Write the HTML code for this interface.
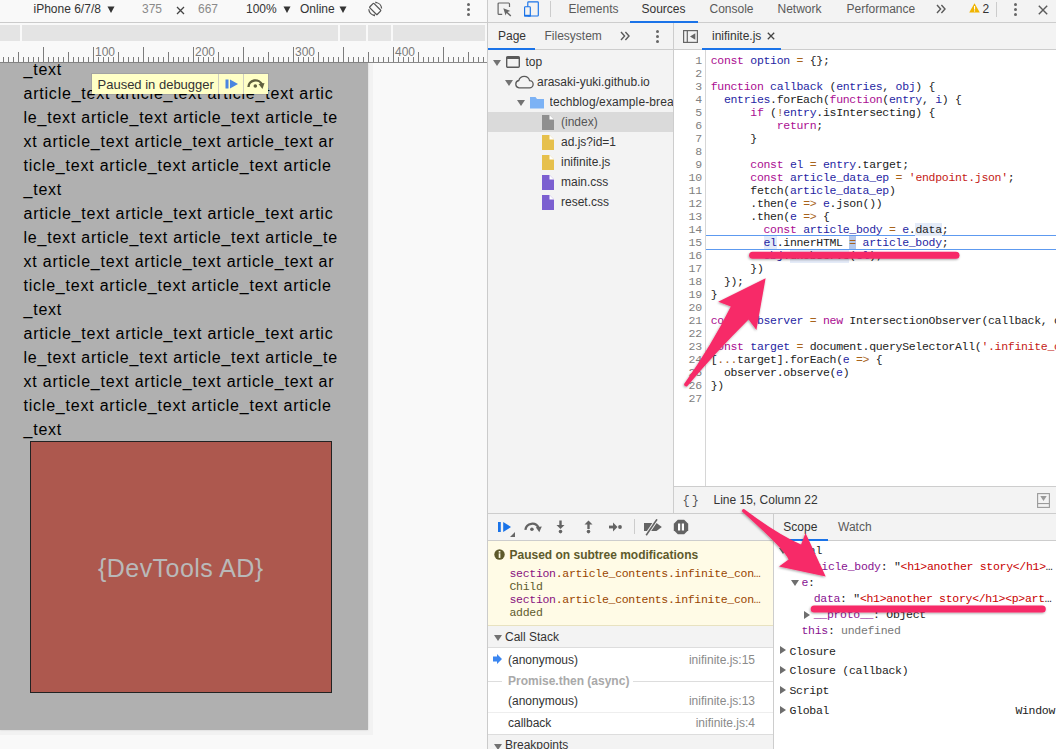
<!DOCTYPE html><html><head><meta charset="utf-8"><style>html,body{margin:0;padding:0}body{width:1056px;height:749px;overflow:hidden;position:relative;background:#f9f9f9;font-family:"Liberation Sans",sans-serif}</style></head><body><div style="position:absolute;left:0px;top:0px;width:487px;height:749px;background:#f9f9f9"></div><div style="position:absolute;left:0px;top:22px;width:487px;height:1px;background:#cbcbcb"></div><div style="position:absolute;left:33.5px;top:-1.16px;line-height:20px;font-size:12px;font-family:'Liberation Sans',sans-serif;color:#333;white-space:pre;">iPhone 6/7/8</div><svg style="position:absolute;left:107px;top:5px" width="8" height="8"><path d="M0.5 1.5 L7.5 1.5 L4 8 Z" fill="#333"/></svg><div style="position:absolute;left:142px;top:-1.16px;line-height:20px;font-size:12px;font-family:'Liberation Sans',sans-serif;color:#8a8a8a;white-space:pre;">375</div><svg style="position:absolute;left:176px;top:6px" width="9" height="9"><path d="M1 1 L8 8 M8 1 L1 8" stroke="#444" stroke-width="1.3"/></svg><div style="position:absolute;left:198px;top:-1.16px;line-height:20px;font-size:12px;font-family:'Liberation Sans',sans-serif;color:#8a8a8a;white-space:pre;">667</div><div style="position:absolute;left:246px;top:-1.16px;line-height:20px;font-size:12px;font-family:'Liberation Sans',sans-serif;color:#333;white-space:pre;">100%</div><svg style="position:absolute;left:283px;top:5px" width="8" height="8"><path d="M0.5 1.5 L7.5 1.5 L4 8 Z" fill="#333"/></svg><div style="position:absolute;left:300px;top:-1.16px;line-height:20px;font-size:12px;font-family:'Liberation Sans',sans-serif;color:#333;white-space:pre;">Online</div><svg style="position:absolute;left:339px;top:5px" width="8" height="8"><path d="M0.5 1.5 L7.5 1.5 L4 8 Z" fill="#333"/></svg><svg style="position:absolute;left:367px;top:1px" width="17" height="16" viewBox="0 0 17 16"><g transform="translate(8.2 7.9)"><rect x="-5.3" y="-3" width="10.6" height="6" rx="0.8" transform="rotate(45)" fill="none" stroke="#555" stroke-width="1.25"/><path d="M0.6 -6.4 A6.4 6.4 0 0 1 6.4 -0.4" fill="none" stroke="#555" stroke-width="1.25"/><path d="M-0.6 6.4 A6.4 6.4 0 0 1 -6.4 0.4" fill="none" stroke="#555" stroke-width="1.25"/><path d="M0.2 -7.5 L2.4 -6.4 L0.2 -5.3 Z" fill="#555"/><path d="M-0.2 7.5 L-2.4 6.4 L-0.2 5.3 Z" fill="#555"/></g></svg><div style="position:absolute;left:466.7px;top:3.0px;width:3px;height:3px;border-radius:50%;background:#666"></div><div style="position:absolute;left:466.7px;top:8.0px;width:3px;height:3px;border-radius:50%;background:#666"></div><div style="position:absolute;left:466.7px;top:13.0px;width:3px;height:3px;border-radius:50%;background:#666"></div><div style="position:absolute;left:0px;top:25px;width:20px;height:16px;background:#e4e4e4"></div><div style="position:absolute;left:22px;top:25px;width:316px;height:16px;background:#e4e4e4"></div><div style="position:absolute;left:340px;top:25px;width:26px;height:16px;background:#e4e4e4"></div><div style="position:absolute;left:368px;top:25px;width:23px;height:16px;background:#e4e4e4"></div><div style="position:absolute;left:393px;top:25px;width:92px;height:16px;background:#e4e4e4"></div><svg style="position:absolute;left:0;top:0" width="487" height="64"><rect x="3" y="57" width="1" height="5" fill="#7c7c7c"/><rect x="8" y="57" width="1" height="5" fill="#7c7c7c"/><rect x="13" y="57" width="1" height="5" fill="#7c7c7c"/><rect x="18" y="52" width="1" height="10" fill="#7c7c7c"/><rect x="23" y="57" width="1" height="5" fill="#7c7c7c"/><rect x="28" y="57" width="1" height="5" fill="#7c7c7c"/><rect x="33" y="57" width="1" height="5" fill="#7c7c7c"/><rect x="38" y="57" width="1" height="5" fill="#7c7c7c"/><rect x="43" y="47" width="1" height="15" fill="#7c7c7c"/><rect x="48" y="57" width="1" height="5" fill="#7c7c7c"/><rect x="53" y="57" width="1" height="5" fill="#7c7c7c"/><rect x="58" y="57" width="1" height="5" fill="#7c7c7c"/><rect x="63" y="57" width="1" height="5" fill="#7c7c7c"/><rect x="68" y="52" width="1" height="10" fill="#7c7c7c"/><rect x="73" y="57" width="1" height="5" fill="#7c7c7c"/><rect x="78" y="57" width="1" height="5" fill="#7c7c7c"/><rect x="83" y="57" width="1" height="5" fill="#7c7c7c"/><rect x="88" y="57" width="1" height="5" fill="#7c7c7c"/><rect x="93" y="47" width="1" height="15" fill="#7c7c7c"/><rect x="98" y="57" width="1" height="5" fill="#7c7c7c"/><rect x="103" y="57" width="1" height="5" fill="#7c7c7c"/><rect x="108" y="57" width="1" height="5" fill="#7c7c7c"/><rect x="113" y="57" width="1" height="5" fill="#7c7c7c"/><rect x="118" y="52" width="1" height="10" fill="#7c7c7c"/><rect x="123" y="57" width="1" height="5" fill="#7c7c7c"/><rect x="128" y="57" width="1" height="5" fill="#7c7c7c"/><rect x="133" y="57" width="1" height="5" fill="#7c7c7c"/><rect x="138" y="57" width="1" height="5" fill="#7c7c7c"/><rect x="143" y="47" width="1" height="15" fill="#7c7c7c"/><rect x="148" y="57" width="1" height="5" fill="#7c7c7c"/><rect x="153" y="57" width="1" height="5" fill="#7c7c7c"/><rect x="158" y="57" width="1" height="5" fill="#7c7c7c"/><rect x="163" y="57" width="1" height="5" fill="#7c7c7c"/><rect x="168" y="52" width="1" height="10" fill="#7c7c7c"/><rect x="173" y="57" width="1" height="5" fill="#7c7c7c"/><rect x="178" y="57" width="1" height="5" fill="#7c7c7c"/><rect x="183" y="57" width="1" height="5" fill="#7c7c7c"/><rect x="188" y="57" width="1" height="5" fill="#7c7c7c"/><rect x="193" y="47" width="1" height="15" fill="#7c7c7c"/><rect x="198" y="57" width="1" height="5" fill="#7c7c7c"/><rect x="203" y="57" width="1" height="5" fill="#7c7c7c"/><rect x="208" y="57" width="1" height="5" fill="#7c7c7c"/><rect x="213" y="57" width="1" height="5" fill="#7c7c7c"/><rect x="218" y="52" width="1" height="10" fill="#7c7c7c"/><rect x="223" y="57" width="1" height="5" fill="#7c7c7c"/><rect x="228" y="57" width="1" height="5" fill="#7c7c7c"/><rect x="233" y="57" width="1" height="5" fill="#7c7c7c"/><rect x="238" y="57" width="1" height="5" fill="#7c7c7c"/><rect x="243" y="47" width="1" height="15" fill="#7c7c7c"/><rect x="248" y="57" width="1" height="5" fill="#7c7c7c"/><rect x="253" y="57" width="1" height="5" fill="#7c7c7c"/><rect x="258" y="57" width="1" height="5" fill="#7c7c7c"/><rect x="263" y="57" width="1" height="5" fill="#7c7c7c"/><rect x="268" y="52" width="1" height="10" fill="#7c7c7c"/><rect x="273" y="57" width="1" height="5" fill="#7c7c7c"/><rect x="278" y="57" width="1" height="5" fill="#7c7c7c"/><rect x="283" y="57" width="1" height="5" fill="#7c7c7c"/><rect x="288" y="57" width="1" height="5" fill="#7c7c7c"/><rect x="293" y="47" width="1" height="15" fill="#7c7c7c"/><rect x="298" y="57" width="1" height="5" fill="#7c7c7c"/><rect x="303" y="57" width="1" height="5" fill="#7c7c7c"/><rect x="308" y="57" width="1" height="5" fill="#7c7c7c"/><rect x="313" y="57" width="1" height="5" fill="#7c7c7c"/><rect x="318" y="52" width="1" height="10" fill="#7c7c7c"/><rect x="323" y="57" width="1" height="5" fill="#7c7c7c"/><rect x="328" y="57" width="1" height="5" fill="#7c7c7c"/><rect x="333" y="57" width="1" height="5" fill="#7c7c7c"/><rect x="338" y="57" width="1" height="5" fill="#7c7c7c"/><rect x="343" y="47" width="1" height="15" fill="#7c7c7c"/><rect x="348" y="57" width="1" height="5" fill="#7c7c7c"/><rect x="353" y="57" width="1" height="5" fill="#7c7c7c"/><rect x="358" y="57" width="1" height="5" fill="#7c7c7c"/><rect x="363" y="57" width="1" height="5" fill="#7c7c7c"/><rect x="368" y="52" width="1" height="10" fill="#7c7c7c"/><rect x="373" y="57" width="1" height="5" fill="#7c7c7c"/><rect x="378" y="57" width="1" height="5" fill="#7c7c7c"/><rect x="383" y="57" width="1" height="5" fill="#7c7c7c"/><rect x="388" y="57" width="1" height="5" fill="#7c7c7c"/><rect x="393" y="47" width="1" height="15" fill="#7c7c7c"/><rect x="398" y="57" width="1" height="5" fill="#7c7c7c"/><rect x="403" y="57" width="1" height="5" fill="#7c7c7c"/><rect x="408" y="57" width="1" height="5" fill="#7c7c7c"/><rect x="413" y="57" width="1" height="5" fill="#7c7c7c"/><rect x="418" y="52" width="1" height="10" fill="#7c7c7c"/><rect x="423" y="57" width="1" height="5" fill="#7c7c7c"/><rect x="428" y="57" width="1" height="5" fill="#7c7c7c"/><rect x="433" y="57" width="1" height="5" fill="#7c7c7c"/><rect x="438" y="57" width="1" height="5" fill="#7c7c7c"/><rect x="443" y="47" width="1" height="15" fill="#7c7c7c"/><rect x="448" y="57" width="1" height="5" fill="#7c7c7c"/><rect x="453" y="57" width="1" height="5" fill="#7c7c7c"/><rect x="458" y="57" width="1" height="5" fill="#7c7c7c"/><rect x="463" y="57" width="1" height="5" fill="#7c7c7c"/><rect x="468" y="52" width="1" height="10" fill="#7c7c7c"/><rect x="473" y="57" width="1" height="5" fill="#7c7c7c"/><rect x="478" y="57" width="1" height="5" fill="#7c7c7c"/><rect x="483" y="57" width="1" height="5" fill="#7c7c7c"/><rect x="94" y="46" width="21" height="11" fill="#fafafa"/><rect x="194" y="46" width="21" height="11" fill="#fafafa"/><rect x="294" y="46" width="21" height="11" fill="#fafafa"/><rect x="394" y="46" width="21" height="11" fill="#fafafa"/><rect x="0" y="62" width="487" height="1" fill="#8a8a8a"/></svg><div style="position:absolute;left:95px;top:41.54px;line-height:20px;font-size:12px;font-family:'Liberation Sans',sans-serif;color:#7a7a7a;white-space:pre;">100</div><div style="position:absolute;left:195px;top:41.54px;line-height:20px;font-size:12px;font-family:'Liberation Sans',sans-serif;color:#7a7a7a;white-space:pre;">200</div><div style="position:absolute;left:295px;top:41.54px;line-height:20px;font-size:12px;font-family:'Liberation Sans',sans-serif;color:#7a7a7a;white-space:pre;">300</div><div style="position:absolute;left:395px;top:41.54px;line-height:20px;font-size:12px;font-family:'Liberation Sans',sans-serif;color:#7a7a7a;white-space:pre;">400</div><div style="position:absolute;left:368px;top:63px;width:5px;height:672px;background:#f2f2f2"></div><div style="position:absolute;left:0px;top:730px;width:368px;height:5px;background:#f2f2f2"></div><div style="position:absolute;left:0px;top:63px;width:368px;height:667px;background:#b0b0b0;box-shadow:0 0 2px rgba(0,0,0,0.15)"></div><div style="position:absolute;left:23.5px;top:59.76px;line-height:20px;font-size:16px;font-family:'Liberation Sans',sans-serif;color:#000;white-space:pre;letter-spacing:0.78px;">_text</div><div style="position:absolute;left:23.5px;top:83.76px;line-height:20px;font-size:16px;font-family:'Liberation Sans',sans-serif;color:#000;white-space:pre;letter-spacing:0.78px;">article_text article_text article_text artic</div><div style="position:absolute;left:23.5px;top:107.76px;line-height:20px;font-size:16px;font-family:'Liberation Sans',sans-serif;color:#000;white-space:pre;letter-spacing:0.78px;">le_text article_text article_text article_te</div><div style="position:absolute;left:23.5px;top:131.76px;line-height:20px;font-size:16px;font-family:'Liberation Sans',sans-serif;color:#000;white-space:pre;letter-spacing:0.78px;">xt article_text article_text article_text ar</div><div style="position:absolute;left:23.5px;top:155.76px;line-height:20px;font-size:16px;font-family:'Liberation Sans',sans-serif;color:#000;white-space:pre;letter-spacing:0.78px;">ticle_text article_text article_text article</div><div style="position:absolute;left:23.5px;top:179.76px;line-height:20px;font-size:16px;font-family:'Liberation Sans',sans-serif;color:#000;white-space:pre;letter-spacing:0.78px;">_text</div><div style="position:absolute;left:23.5px;top:203.76px;line-height:20px;font-size:16px;font-family:'Liberation Sans',sans-serif;color:#000;white-space:pre;letter-spacing:0.78px;">article_text article_text article_text artic</div><div style="position:absolute;left:23.5px;top:227.76px;line-height:20px;font-size:16px;font-family:'Liberation Sans',sans-serif;color:#000;white-space:pre;letter-spacing:0.78px;">le_text article_text article_text article_te</div><div style="position:absolute;left:23.5px;top:251.76px;line-height:20px;font-size:16px;font-family:'Liberation Sans',sans-serif;color:#000;white-space:pre;letter-spacing:0.78px;">xt article_text article_text article_text ar</div><div style="position:absolute;left:23.5px;top:275.76px;line-height:20px;font-size:16px;font-family:'Liberation Sans',sans-serif;color:#000;white-space:pre;letter-spacing:0.78px;">ticle_text article_text article_text article</div><div style="position:absolute;left:23.5px;top:299.76px;line-height:20px;font-size:16px;font-family:'Liberation Sans',sans-serif;color:#000;white-space:pre;letter-spacing:0.78px;">_text</div><div style="position:absolute;left:23.5px;top:323.76px;line-height:20px;font-size:16px;font-family:'Liberation Sans',sans-serif;color:#000;white-space:pre;letter-spacing:0.78px;">article_text article_text article_text artic</div><div style="position:absolute;left:23.5px;top:347.76px;line-height:20px;font-size:16px;font-family:'Liberation Sans',sans-serif;color:#000;white-space:pre;letter-spacing:0.78px;">le_text article_text article_text article_te</div><div style="position:absolute;left:23.5px;top:371.76px;line-height:20px;font-size:16px;font-family:'Liberation Sans',sans-serif;color:#000;white-space:pre;letter-spacing:0.78px;">xt article_text article_text article_text ar</div><div style="position:absolute;left:23.5px;top:395.76px;line-height:20px;font-size:16px;font-family:'Liberation Sans',sans-serif;color:#000;white-space:pre;letter-spacing:0.78px;">ticle_text article_text article_text article</div><div style="position:absolute;left:23.5px;top:419.76px;line-height:20px;font-size:16px;font-family:'Liberation Sans',sans-serif;color:#000;white-space:pre;letter-spacing:0.78px;">_text</div><div style="position:absolute;left:30px;top:441px;width:300px;height:250px;background:#ad584e;border:1px solid #222"></div><div style="position:absolute;left:98px;top:557.84px;line-height:20px;font-size:25px;font-family:'Liberation Sans',sans-serif;color:#b9b9b9;white-space:pre;letter-spacing:0.45px;">{DevTools AD}</div><div style="position:absolute;left:92px;top:74px;width:176px;height:20px;background:#ffffc6;box-shadow:0 0 0 1px rgba(0,0,0,0.08)"></div><div style="position:absolute;left:218px;top:74px;width:1px;height:20px;background:#cfcfc0"></div><div style="position:absolute;left:243px;top:74px;width:1px;height:20px;background:#cfcfc0"></div><div style="position:absolute;left:97.5px;top:74.80px;line-height:20px;font-size:13px;font-family:'Liberation Sans',sans-serif;color:#333;white-space:pre;">Paused in debugger</div><svg style="position:absolute;left:225px;top:79px" width="14" height="10"><rect x="0.5" y="0.5" width="3" height="9" fill="#4a86e0"/><path d="M5 0.5 L13 5 L5 9.5 Z" fill="#4a86e0"/></svg><svg style="position:absolute;left:246px;top:78px" width="20" height="12" viewBox="0 0 20 12"><path d="M2.5 9 A7 6.5 0 0 1 16 6.5" fill="none" stroke="#5f5f3e" stroke-width="2.4"/><path d="M12.5 6 L18.5 5 L16.5 11 Z" fill="#5f5f3e"/><circle cx="9.3" cy="8" r="1.8" fill="#5f5f3e"/></svg><div style="position:absolute;left:487px;top:0px;width:1px;height:749px;background:#cbcbcb"></div><div style="position:absolute;left:488px;top:0px;width:568px;height:749px;background:#f3f3f3"></div><div style="position:absolute;left:488px;top:22px;width:568px;height:1px;background:#cdcdcd"></div><svg style="position:absolute;left:497px;top:2px" width="17" height="16" viewBox="0 0 17 16"><path d="M5.2 12.3 H2 Q1.1 12.3 1.1 11.4 V1.9 Q1.1 1 2 1 H11.6 Q12.5 1 12.5 1.9 V5" fill="none" stroke="#666" stroke-width="1.2"/><path d="M6.3 6.3 L13.3 8.9 L10.6 9.9 L14.3 13.6 L13.3 14.6 L9.6 10.9 L8.6 13.5 Z" fill="#666"/></svg><svg style="position:absolute;left:523px;top:0px" width="17" height="18" viewBox="0 0 17 18"><rect x="4.8" y="1.8" width="10.5" height="14.2" rx="0.7" fill="none" stroke="#1a73e8" stroke-width="1.15"/><rect x="1.6" y="6.7" width="5.7" height="9.3" rx="0.7" fill="#f3f3f3" stroke="#1a73e8" stroke-width="1.15"/><rect x="1.1" y="14.8" width="6.7" height="1.7" fill="#1a73e8"/></svg><div style="position:absolute;left:550px;top:1px;width:1px;height:16px;background:#ccc"></div><div style="position:absolute;left:568.5px;top:-0.86px;line-height:20px;font-size:12px;font-family:'Liberation Sans',sans-serif;color:#5a5a5a;white-space:pre;">Elements</div><div style="position:absolute;left:641.5px;top:-0.86px;line-height:20px;font-size:12px;font-family:'Liberation Sans',sans-serif;color:#333;white-space:pre;">Sources</div><div style="position:absolute;left:630px;top:21px;width:68px;height:2px;background:#1a73e8"></div><div style="position:absolute;left:709.5px;top:-0.86px;line-height:20px;font-size:12px;font-family:'Liberation Sans',sans-serif;color:#5a5a5a;white-space:pre;">Console</div><div style="position:absolute;left:777.5px;top:-0.86px;line-height:20px;font-size:12px;font-family:'Liberation Sans',sans-serif;color:#5a5a5a;white-space:pre;">Network</div><div style="position:absolute;left:846.5px;top:-0.86px;line-height:20px;font-size:12px;font-family:'Liberation Sans',sans-serif;color:#5a5a5a;white-space:pre;">Performance</div><svg style="position:absolute;left:936px;top:4px" width="11" height="10" viewBox="0 0 11 10"><path d="M1 1 L4.6 5 L1 9 M5.4 1 L9 5 L5.4 9" fill="none" stroke="#5a5a5a" stroke-width="1.4"/></svg><svg style="position:absolute;left:969px;top:3px" width="11" height="10" viewBox="0 0 11 10"><path d="M5.5 0.3 L10.8 9.6 H0.2 Z" fill="#f0b400"/><rect x="5" y="3" width="1.1" height="3.6" fill="#fff"/><rect x="5" y="7.4" width="1.1" height="1.1" fill="#fff"/></svg><div style="position:absolute;left:982.5px;top:-0.86px;line-height:20px;font-size:12px;font-family:'Liberation Sans',sans-serif;color:#333;white-space:pre;">2</div><div style="position:absolute;left:996px;top:2px;width:1px;height:15px;background:#ccc"></div><div style="position:absolute;left:1014px;top:3.0px;width:3px;height:3px;border-radius:50%;background:#666"></div><div style="position:absolute;left:1014px;top:8.0px;width:3px;height:3px;border-radius:50%;background:#666"></div><div style="position:absolute;left:1014px;top:13.0px;width:3px;height:3px;border-radius:50%;background:#666"></div><svg style="position:absolute;left:1038px;top:5px" width="10" height="10"><path d="M0.8 0.8 L9.2 9.2 M9.2 0.8 L0.8 9.2" stroke="#5a5a5a" stroke-width="1.4"/></svg><div style="position:absolute;left:488px;top:49px;width:568px;height:1px;background:#cdcdcd"></div><div style="position:absolute;left:673px;top:23px;width:1px;height:490px;background:#cdcdcd"></div><div style="position:absolute;left:498px;top:25.94px;line-height:20px;font-size:12px;font-family:'Liberation Sans',sans-serif;color:#333;white-space:pre;">Page</div><div style="position:absolute;left:488px;top:48px;width:47px;height:2px;background:#1a73e8"></div><div style="position:absolute;left:544.5px;top:25.94px;line-height:20px;font-size:12px;font-family:'Liberation Sans',sans-serif;color:#5a5a5a;white-space:pre;">Filesystem</div><svg style="position:absolute;left:620px;top:31px" width="11" height="10" viewBox="0 0 11 10"><path d="M1 1 L4.6 5 L1 9 M5.4 1 L9 5 L5.4 9" fill="none" stroke="#5a5a5a" stroke-width="1.4"/></svg><div style="position:absolute;left:656px;top:30.0px;width:3px;height:3px;border-radius:50%;background:#666"></div><div style="position:absolute;left:656px;top:35.0px;width:3px;height:3px;border-radius:50%;background:#666"></div><div style="position:absolute;left:656px;top:40.0px;width:3px;height:3px;border-radius:50%;background:#666"></div><svg style="position:absolute;left:683px;top:30px" width="15" height="13" viewBox="0 0 15 13"><rect x="0.6" y="0.6" width="13.8" height="11.8" fill="none" stroke="#666" stroke-width="1.2"/><rect x="3.7" y="0.6" width="1.2" height="11.8" fill="#666"/><path d="M12.3 3.3 L7 6.5 L12.3 9.7 Z" fill="#666"/></svg><div style="position:absolute;left:712px;top:25.94px;line-height:20px;font-size:12px;font-family:'Liberation Sans',sans-serif;color:#333;white-space:pre;">inifinite.js</div><svg style="position:absolute;left:767px;top:32px" width="8" height="8"><path d="M0.8 0.8 L7.2 7.2 M7.2 0.8 L0.8 7.2" stroke="#444" stroke-width="1.3"/></svg><div style="position:absolute;left:702px;top:48px;width:79px;height:2px;background:#1a73e8"></div><div style="position:absolute;left:488px;top:112px;width:185px;height:20px;background:#dadada"></div><svg style="position:absolute;left:493px;top:60px" width="8" height="6"><path d="M0 0 H8 L4 6 Z" fill="#727272"/></svg><svg style="position:absolute;left:506px;top:56px" width="14" height="12" viewBox="0 0 14 12"><rect x="0.7" y="0.7" width="12.6" height="10.6" rx="1" fill="none" stroke="#5a5a5a" stroke-width="1.4"/><rect x="0.7" y="0.7" width="12.6" height="2.3" fill="#5a5a5a"/></svg><div style="position:absolute;left:525.4px;top:51.84px;line-height:20px;font-size:12px;font-family:'Liberation Sans',sans-serif;color:#333;white-space:pre;">top</div><svg style="position:absolute;left:505px;top:80px" width="8" height="6"><path d="M0 0 H8 L4 6 Z" fill="#727272"/></svg><svg style="position:absolute;left:514px;top:75px" width="20" height="14" viewBox="0 0 20 14"><path d="M5 12.8 H15.5 A3.6 3.6 0 0 0 15.6 5.6 A5.6 5.6 0 0 0 4.8 5.5 A3.7 3.7 0 0 0 5 12.8 Z" fill="none" stroke="#5a5a5a" stroke-width="1.3"/></svg><div style="position:absolute;left:537px;top:71.64px;line-height:20px;font-size:12px;font-family:'Liberation Sans',sans-serif;color:#333;white-space:pre;">arasaki-yuki.github.io</div><svg style="position:absolute;left:517px;top:100px" width="8" height="6"><path d="M0 0 H8 L4 6 Z" fill="#727272"/></svg><svg style="position:absolute;left:530px;top:96px" width="15" height="13" viewBox="0 0 15 13"><path d="M0 1 H5.5 L7 3 H14 V12.5 H0 Z" fill="#7cb2f5"/></svg><div style="position:absolute;left:549.5px;top:91.84px;line-height:20px;font-size:12px;font-family:'Liberation Sans',sans-serif;color:#333;white-space:pre;width:123.5px;overflow:hidden;letter-spacing:0.1px;">techblog/example-breakpoints</div><svg style="position:absolute;left:542px;top:115px" width="12" height="15" viewBox="0 0 12 15"><path d="M0 0 H7.5 L12 4.5 V15 H0 Z" fill="#8f8f8f"/><path d="M7.5 0 V4.5 H12 Z" fill="#fff"/></svg><div style="position:absolute;left:561px;top:111.84px;line-height:20px;font-size:12px;font-family:'Liberation Sans',sans-serif;color:#555;white-space:pre;">(index)</div><svg style="position:absolute;left:542px;top:135px" width="12" height="15" viewBox="0 0 12 15"><path d="M0 0 H7.5 L12 4.5 V15 H0 Z" fill="#e6c04c"/><path d="M7.5 0 V4.5 H12 Z" fill="#fff"/></svg><div style="position:absolute;left:561px;top:131.84px;line-height:20px;font-size:12px;font-family:'Liberation Sans',sans-serif;color:#333;white-space:pre;">ad.js?id=1</div><svg style="position:absolute;left:542px;top:155px" width="12" height="15" viewBox="0 0 12 15"><path d="M0 0 H7.5 L12 4.5 V15 H0 Z" fill="#e6c04c"/><path d="M7.5 0 V4.5 H12 Z" fill="#fff"/></svg><div style="position:absolute;left:561px;top:151.84px;line-height:20px;font-size:12px;font-family:'Liberation Sans',sans-serif;color:#333;white-space:pre;">inifinite.js</div><svg style="position:absolute;left:542px;top:175px" width="12" height="15" viewBox="0 0 12 15"><path d="M0 0 H7.5 L12 4.5 V15 H0 Z" fill="#7b5fd0"/><path d="M7.5 0 V4.5 H12 Z" fill="#fff"/></svg><div style="position:absolute;left:561px;top:171.84px;line-height:20px;font-size:12px;font-family:'Liberation Sans',sans-serif;color:#333;white-space:pre;">main.css</div><svg style="position:absolute;left:542px;top:195px" width="12" height="15" viewBox="0 0 12 15"><path d="M0 0 H7.5 L12 4.5 V15 H0 Z" fill="#7b5fd0"/><path d="M7.5 0 V4.5 H12 Z" fill="#fff"/></svg><div style="position:absolute;left:561px;top:191.84px;line-height:20px;font-size:12px;font-family:'Liberation Sans',sans-serif;color:#333;white-space:pre;">reset.css</div><div style="position:absolute;left:674px;top:50px;width:382px;height:436px;background:#fff"></div><div style="position:absolute;left:705px;top:50px;width:1px;height:436px;background:#d6d6d6"></div><div style="position:absolute;left:706px;top:235px;width:350px;height:1px;background:#5d9af0"></div><div style="position:absolute;left:706px;top:249px;width:350px;height:1px;background:#5d9af0"></div><div style="position:absolute;left:915.3000000000001px;top:223px;width:26.4px;height:13px;background:#e4ebf8"></div><div style="position:absolute;left:763.5px;top:236px;width:13.2px;height:13px;background:#e4ebf8"></div><div style="position:absolute;left:849.3000000000001px;top:236px;width:6.6px;height:13px;background:#b4c7ea"></div><div style="position:absolute;left:789.9000000000001px;top:250px;width:59.4px;height:13px;background:#e4ebf8"></div><div style="position:absolute;left:706px;top:50px;width:350px;height:436px;overflow:hidden"><div style="position:absolute;left:4.7000000000000455px;top:1.04px;line-height:20px;font-size:11.5px;font-family:'Liberation Mono',monospace;color:#222;white-space:pre;letter-spacing:-0.300px;"><span style="color:#aa0d91">const</span><span style="color:#222"> </span><span style="color:#1f1fa3">option</span><span style="color:#222"> </span><span style="color:#a8641c">=</span><span style="color:#222"> {};</span></div><div style="position:absolute;left:4.7000000000000455px;top:14.04px;line-height:20px;font-size:11.5px;font-family:'Liberation Mono',monospace;color:#222;white-space:pre;letter-spacing:-0.300px;"></div><div style="position:absolute;left:4.7000000000000455px;top:27.04px;line-height:20px;font-size:11.5px;font-family:'Liberation Mono',monospace;color:#222;white-space:pre;letter-spacing:-0.300px;"><span style="color:#aa0d91">function</span><span style="color:#222"> </span><span style="color:#1f1fa3">callback</span><span style="color:#222"> (</span><span style="color:#1f1fa3">entries</span><span style="color:#222">, </span><span style="color:#1f1fa3">obj</span><span style="color:#222">) {</span></div><div style="position:absolute;left:4.7000000000000455px;top:40.04px;line-height:20px;font-size:11.5px;font-family:'Liberation Mono',monospace;color:#222;white-space:pre;letter-spacing:-0.300px;"><span style="color:#222">  </span><span style="color:#1f1fa3">entries</span><span style="color:#222">.forEach(</span><span style="color:#aa0d91">function</span><span style="color:#222">(</span><span style="color:#1f1fa3">entry</span><span style="color:#222">, </span><span style="color:#1f1fa3">i</span><span style="color:#222">) {</span></div><div style="position:absolute;left:4.7000000000000455px;top:53.04px;line-height:20px;font-size:11.5px;font-family:'Liberation Mono',monospace;color:#222;white-space:pre;letter-spacing:-0.300px;"><span style="color:#222">      </span><span style="color:#aa0d91">if</span><span style="color:#222"> (</span><span style="color:#a8641c">!</span><span style="color:#1f1fa3">entry</span><span style="color:#222">.isIntersecting) {</span></div><div style="position:absolute;left:4.7000000000000455px;top:66.04px;line-height:20px;font-size:11.5px;font-family:'Liberation Mono',monospace;color:#222;white-space:pre;letter-spacing:-0.300px;"><span style="color:#222">          </span><span style="color:#aa0d91">return</span><span style="color:#222">;</span></div><div style="position:absolute;left:4.7000000000000455px;top:79.04px;line-height:20px;font-size:11.5px;font-family:'Liberation Mono',monospace;color:#222;white-space:pre;letter-spacing:-0.300px;"><span style="color:#222">      }</span></div><div style="position:absolute;left:4.7000000000000455px;top:92.04px;line-height:20px;font-size:11.5px;font-family:'Liberation Mono',monospace;color:#222;white-space:pre;letter-spacing:-0.300px;"></div><div style="position:absolute;left:4.7000000000000455px;top:105.04px;line-height:20px;font-size:11.5px;font-family:'Liberation Mono',monospace;color:#222;white-space:pre;letter-spacing:-0.300px;"><span style="color:#222">      </span><span style="color:#aa0d91">const</span><span style="color:#222"> </span><span style="color:#1f1fa3">el</span><span style="color:#222"> </span><span style="color:#a8641c">=</span><span style="color:#222"> </span><span style="color:#1f1fa3">entry</span><span style="color:#222">.target;</span></div><div style="position:absolute;left:4.7000000000000455px;top:118.04px;line-height:20px;font-size:11.5px;font-family:'Liberation Mono',monospace;color:#222;white-space:pre;letter-spacing:-0.300px;"><span style="color:#222">      </span><span style="color:#aa0d91">const</span><span style="color:#222"> </span><span style="color:#1f1fa3">article_data_ep</span><span style="color:#222"> </span><span style="color:#a8641c">=</span><span style="color:#222"> </span><span style="color:#c41a16">&#x27;endpoint.json&#x27;</span><span style="color:#222">;</span></div><div style="position:absolute;left:4.7000000000000455px;top:131.04px;line-height:20px;font-size:11.5px;font-family:'Liberation Mono',monospace;color:#222;white-space:pre;letter-spacing:-0.300px;"><span style="color:#222">      fetch(</span><span style="color:#1f1fa3">article_data_ep</span><span style="color:#222">)</span></div><div style="position:absolute;left:4.7000000000000455px;top:144.04px;line-height:20px;font-size:11.5px;font-family:'Liberation Mono',monospace;color:#222;white-space:pre;letter-spacing:-0.300px;"><span style="color:#222">      .then(</span><span style="color:#1f1fa3">e</span><span style="color:#222"> </span><span style="color:#a8641c">=&gt;</span><span style="color:#222"> </span><span style="color:#1f1fa3">e</span><span style="color:#222">.json())</span></div><div style="position:absolute;left:4.7000000000000455px;top:157.04px;line-height:20px;font-size:11.5px;font-family:'Liberation Mono',monospace;color:#222;white-space:pre;letter-spacing:-0.300px;"><span style="color:#222">      .then(</span><span style="color:#1f1fa3">e</span><span style="color:#222"> </span><span style="color:#a8641c">=&gt;</span><span style="color:#222"> {</span></div><div style="position:absolute;left:4.7000000000000455px;top:170.04px;line-height:20px;font-size:11.5px;font-family:'Liberation Mono',monospace;color:#222;white-space:pre;letter-spacing:-0.300px;"><span style="color:#222">        </span><span style="color:#aa0d91">const</span><span style="color:#222"> </span><span style="color:#1f1fa3">article_body</span><span style="color:#222"> </span><span style="color:#a8641c">=</span><span style="color:#222"> </span><span style="color:#1f1fa3">e</span><span style="color:#222">.data;</span></div><div style="position:absolute;left:4.7000000000000455px;top:183.04px;line-height:20px;font-size:11.5px;font-family:'Liberation Mono',monospace;color:#222;white-space:pre;letter-spacing:-0.300px;"><span style="color:#222">        </span><span style="color:#1f1fa3">el</span><span style="color:#222">.innerHTML </span><span style="color:#a8641c">=</span><span style="color:#222"> </span><span style="color:#1f1fa3">article_body</span><span style="color:#222">;</span></div><div style="position:absolute;left:4.7000000000000455px;top:196.04px;line-height:20px;font-size:11.5px;font-family:'Liberation Mono',monospace;color:#222;white-space:pre;letter-spacing:-0.300px;"><span style="color:#222">        </span><span style="color:#1f1fa3">obj</span><span style="color:#222">.unobserve(</span><span style="color:#1f1fa3">el</span><span style="color:#222">);</span></div><div style="position:absolute;left:4.7000000000000455px;top:209.04px;line-height:20px;font-size:11.5px;font-family:'Liberation Mono',monospace;color:#222;white-space:pre;letter-spacing:-0.300px;"><span style="color:#222">      })</span></div><div style="position:absolute;left:4.7000000000000455px;top:222.04px;line-height:20px;font-size:11.5px;font-family:'Liberation Mono',monospace;color:#222;white-space:pre;letter-spacing:-0.300px;"><span style="color:#222">  });</span></div><div style="position:absolute;left:4.7000000000000455px;top:235.04px;line-height:20px;font-size:11.5px;font-family:'Liberation Mono',monospace;color:#222;white-space:pre;letter-spacing:-0.300px;"><span style="color:#222">}</span></div><div style="position:absolute;left:4.7000000000000455px;top:248.04px;line-height:20px;font-size:11.5px;font-family:'Liberation Mono',monospace;color:#222;white-space:pre;letter-spacing:-0.300px;"></div><div style="position:absolute;left:4.7000000000000455px;top:261.04px;line-height:20px;font-size:11.5px;font-family:'Liberation Mono',monospace;color:#222;white-space:pre;letter-spacing:-0.300px;"><span style="color:#aa0d91">const</span><span style="color:#222"> </span><span style="color:#1f1fa3">observer</span><span style="color:#222"> </span><span style="color:#a8641c">=</span><span style="color:#222"> </span><span style="color:#aa0d91">new</span><span style="color:#222"> IntersectionObserver(callback, option);</span></div><div style="position:absolute;left:4.7000000000000455px;top:274.04px;line-height:20px;font-size:11.5px;font-family:'Liberation Mono',monospace;color:#222;white-space:pre;letter-spacing:-0.300px;"></div><div style="position:absolute;left:4.7000000000000455px;top:287.04px;line-height:20px;font-size:11.5px;font-family:'Liberation Mono',monospace;color:#222;white-space:pre;letter-spacing:-0.300px;"><span style="color:#aa0d91">const</span><span style="color:#222"> </span><span style="color:#1f1fa3">target</span><span style="color:#222"> </span><span style="color:#a8641c">=</span><span style="color:#222"> document.querySelectorAll(</span><span style="color:#c41a16">&#x27;.infinite_contents&#x27;</span><span style="color:#222">);</span></div><div style="position:absolute;left:4.7000000000000455px;top:300.04px;line-height:20px;font-size:11.5px;font-family:'Liberation Mono',monospace;color:#222;white-space:pre;letter-spacing:-0.300px;"><span style="color:#222">[</span><span style="color:#a8641c">...</span><span style="color:#222">target].forEach(</span><span style="color:#1f1fa3">e</span><span style="color:#222"> </span><span style="color:#a8641c">=&gt;</span><span style="color:#222"> {</span></div><div style="position:absolute;left:4.7000000000000455px;top:313.04px;line-height:20px;font-size:11.5px;font-family:'Liberation Mono',monospace;color:#222;white-space:pre;letter-spacing:-0.300px;"><span style="color:#222">  observer.observe(</span><span style="color:#1f1fa3">e</span><span style="color:#222">)</span></div><div style="position:absolute;left:4.7000000000000455px;top:326.04px;line-height:20px;font-size:11.5px;font-family:'Liberation Mono',monospace;color:#222;white-space:pre;letter-spacing:-0.300px;"><span style="color:#222">})</span></div><div style="position:absolute;left:4.7000000000000455px;top:339.04px;line-height:20px;font-size:11.5px;font-family:'Liberation Mono',monospace;color:#222;white-space:pre;letter-spacing:-0.300px;"></div></div><div style="position:absolute;right:354.20000000000005px;top:51.04px;line-height:20px;font-size:11.5px;font-family:'Liberation Mono',monospace;color:#808080;white-space:pre;letter-spacing:-0.300px;">1</div><div style="position:absolute;right:354.20000000000005px;top:64.04px;line-height:20px;font-size:11.5px;font-family:'Liberation Mono',monospace;color:#808080;white-space:pre;letter-spacing:-0.300px;">2</div><div style="position:absolute;right:354.20000000000005px;top:77.04px;line-height:20px;font-size:11.5px;font-family:'Liberation Mono',monospace;color:#808080;white-space:pre;letter-spacing:-0.300px;">3</div><div style="position:absolute;right:354.20000000000005px;top:90.04px;line-height:20px;font-size:11.5px;font-family:'Liberation Mono',monospace;color:#808080;white-space:pre;letter-spacing:-0.300px;">4</div><div style="position:absolute;right:354.20000000000005px;top:103.04px;line-height:20px;font-size:11.5px;font-family:'Liberation Mono',monospace;color:#808080;white-space:pre;letter-spacing:-0.300px;">5</div><div style="position:absolute;right:354.20000000000005px;top:116.04px;line-height:20px;font-size:11.5px;font-family:'Liberation Mono',monospace;color:#808080;white-space:pre;letter-spacing:-0.300px;">6</div><div style="position:absolute;right:354.20000000000005px;top:129.04px;line-height:20px;font-size:11.5px;font-family:'Liberation Mono',monospace;color:#808080;white-space:pre;letter-spacing:-0.300px;">7</div><div style="position:absolute;right:354.20000000000005px;top:142.04px;line-height:20px;font-size:11.5px;font-family:'Liberation Mono',monospace;color:#808080;white-space:pre;letter-spacing:-0.300px;">8</div><div style="position:absolute;right:354.20000000000005px;top:155.04px;line-height:20px;font-size:11.5px;font-family:'Liberation Mono',monospace;color:#808080;white-space:pre;letter-spacing:-0.300px;">9</div><div style="position:absolute;right:354.20000000000005px;top:168.04px;line-height:20px;font-size:11.5px;font-family:'Liberation Mono',monospace;color:#808080;white-space:pre;letter-spacing:-0.300px;">10</div><div style="position:absolute;right:354.20000000000005px;top:181.04px;line-height:20px;font-size:11.5px;font-family:'Liberation Mono',monospace;color:#808080;white-space:pre;letter-spacing:-0.300px;">11</div><div style="position:absolute;right:354.20000000000005px;top:194.04px;line-height:20px;font-size:11.5px;font-family:'Liberation Mono',monospace;color:#808080;white-space:pre;letter-spacing:-0.300px;">12</div><div style="position:absolute;right:354.20000000000005px;top:207.04px;line-height:20px;font-size:11.5px;font-family:'Liberation Mono',monospace;color:#808080;white-space:pre;letter-spacing:-0.300px;">13</div><div style="position:absolute;right:354.20000000000005px;top:220.04px;line-height:20px;font-size:11.5px;font-family:'Liberation Mono',monospace;color:#808080;white-space:pre;letter-spacing:-0.300px;">14</div><div style="position:absolute;right:354.20000000000005px;top:233.04px;line-height:20px;font-size:11.5px;font-family:'Liberation Mono',monospace;color:#808080;white-space:pre;letter-spacing:-0.300px;">15</div><div style="position:absolute;right:354.20000000000005px;top:246.04px;line-height:20px;font-size:11.5px;font-family:'Liberation Mono',monospace;color:#808080;white-space:pre;letter-spacing:-0.300px;">16</div><div style="position:absolute;right:354.20000000000005px;top:259.04px;line-height:20px;font-size:11.5px;font-family:'Liberation Mono',monospace;color:#808080;white-space:pre;letter-spacing:-0.300px;">17</div><div style="position:absolute;right:354.20000000000005px;top:272.04px;line-height:20px;font-size:11.5px;font-family:'Liberation Mono',monospace;color:#808080;white-space:pre;letter-spacing:-0.300px;">18</div><div style="position:absolute;right:354.20000000000005px;top:285.04px;line-height:20px;font-size:11.5px;font-family:'Liberation Mono',monospace;color:#808080;white-space:pre;letter-spacing:-0.300px;">19</div><div style="position:absolute;right:354.20000000000005px;top:298.04px;line-height:20px;font-size:11.5px;font-family:'Liberation Mono',monospace;color:#808080;white-space:pre;letter-spacing:-0.300px;">20</div><div style="position:absolute;right:354.20000000000005px;top:311.04px;line-height:20px;font-size:11.5px;font-family:'Liberation Mono',monospace;color:#808080;white-space:pre;letter-spacing:-0.300px;">21</div><div style="position:absolute;right:354.20000000000005px;top:324.04px;line-height:20px;font-size:11.5px;font-family:'Liberation Mono',monospace;color:#808080;white-space:pre;letter-spacing:-0.300px;">22</div><div style="position:absolute;right:354.20000000000005px;top:337.04px;line-height:20px;font-size:11.5px;font-family:'Liberation Mono',monospace;color:#808080;white-space:pre;letter-spacing:-0.300px;">23</div><div style="position:absolute;right:354.20000000000005px;top:350.04px;line-height:20px;font-size:11.5px;font-family:'Liberation Mono',monospace;color:#808080;white-space:pre;letter-spacing:-0.300px;">24</div><div style="position:absolute;right:354.20000000000005px;top:363.04px;line-height:20px;font-size:11.5px;font-family:'Liberation Mono',monospace;color:#808080;white-space:pre;letter-spacing:-0.300px;">25</div><div style="position:absolute;right:354.20000000000005px;top:376.04px;line-height:20px;font-size:11.5px;font-family:'Liberation Mono',monospace;color:#808080;white-space:pre;letter-spacing:-0.300px;">26</div><div style="position:absolute;right:354.20000000000005px;top:389.04px;line-height:20px;font-size:11.5px;font-family:'Liberation Mono',monospace;color:#808080;white-space:pre;letter-spacing:-0.300px;">27</div><div style="position:absolute;left:674px;top:486px;width:382px;height:1px;background:#cdcdcd"></div><div style="position:absolute;left:674px;top:487px;width:382px;height:26px;background:#f3f3f3"></div><div style="position:absolute;left:673px;top:487px;width:1px;height:26px;background:#cdcdcd"></div><div style="position:absolute;left:682.5px;top:490.81px;line-height:20px;font-size:12px;font-family:'Liberation Mono',monospace;color:#555;white-space:pre;letter-spacing:2px;">{}</div><div style="position:absolute;left:713.5px;top:489.84px;line-height:20px;font-size:12px;font-family:'Liberation Sans',sans-serif;color:#333;white-space:pre;">Line 15, Column 22</div><svg style="position:absolute;left:1037px;top:493px" width="13" height="15" viewBox="0 0 13 15"><rect x="0.6" y="0.6" width="11.8" height="13.8" fill="none" stroke="#9a9a9a" stroke-width="1.1"/><rect x="0.6" y="10" width="11.8" height="1.1" fill="#9a9a9a"/><path d="M3.3 3 H9.7 L6.5 8 Z" fill="#9a9a9a"/></svg><div style="position:absolute;left:488px;top:513px;width:568px;height:1px;background:#cdcdcd"></div><svg style="position:absolute;left:497px;top:520px" width="20" height="18" viewBox="0 0 20 18"><rect x="1" y="2" width="2.8" height="10" fill="#1a73e8"/><path d="M6.2 2 L14 7 L6.2 12 Z" fill="#1a73e8"/><path d="M18 12 V17 H13 Z" fill="#666"/></svg><svg style="position:absolute;left:522px;top:519px" width="22" height="15" viewBox="0 0 22 15"><path d="M3.4 10.8 A6.9 7 0 0 1 16.6 9" fill="none" stroke="#636363" stroke-width="2.3"/><path d="M13.8 8.3 L19.8 7.6 L17.3 13.2 Z" fill="#636363"/><circle cx="9.9" cy="10.2" r="1.8" fill="#636363"/></svg><svg style="position:absolute;left:555px;top:520px" width="11" height="14" viewBox="0 0 11 14"><rect x="4.3" y="0.5" width="2.4" height="6" fill="#636363"/><path d="M1.5 5 H9.5 L5.5 9 Z" fill="#636363"/><circle cx="5.5" cy="11.6" r="1.8" fill="#636363"/></svg><svg style="position:absolute;left:583px;top:520px" width="11" height="14" viewBox="0 0 11 14"><path d="M1.5 4.5 H9.5 L5.5 0.5 Z" fill="#636363"/><rect x="4.3" y="4" width="2.4" height="5" fill="#636363"/><circle cx="5.5" cy="11.6" r="1.8" fill="#636363"/></svg><svg style="position:absolute;left:608px;top:521px" width="15" height="12" viewBox="0 0 15 12"><rect x="1" y="4.6" width="5" height="2.8" fill="#636363"/><path d="M5 1.5 V10.5 L9.5 6 Z" fill="#636363"/><circle cx="12" cy="6" r="1.9" fill="#636363"/></svg><div style="position:absolute;left:634px;top:519px;width:1px;height:15px;background:#ccc"></div><svg style="position:absolute;left:643px;top:519px" width="20" height="17" viewBox="0 0 20 17"><path d="M1 4 H13.5 L18.8 8 L13.5 12 H1 Z" fill="#636363"/><path d="M3.2 16.2 L14 0.3" stroke="#f3f3f3" stroke-width="3.6"/><path d="M3.2 16.2 L14 0.3" stroke="#636363" stroke-width="1.6"/></svg><svg style="position:absolute;left:673px;top:519px" width="16" height="16" viewBox="0 0 16 16"><path d="M4.8 0.8 H11.2 L15.2 4.8 V11.2 L11.2 15.2 H4.8 L0.8 11.2 V4.8 Z" fill="#636363"/><rect x="5" y="4.5" width="2.2" height="7" fill="#fff"/><rect x="8.8" y="4.5" width="2.2" height="7" fill="#fff"/></svg><div style="position:absolute;left:488px;top:540px;width:285px;height:1px;background:#cdcdcd"></div><div style="position:absolute;left:773px;top:514px;width:1px;height:235px;background:#cdcdcd"></div><div style="position:absolute;left:488px;top:541px;width:285px;height:84px;background:#fffbe6"></div><svg style="position:absolute;left:494px;top:549px" width="11" height="11" viewBox="0 0 11 11"><circle cx="5.5" cy="5.5" r="5.2" fill="#5e5a2c"/><rect x="4.7" y="4.3" width="1.7" height="4.6" fill="#fffbe6"/><rect x="4.7" y="2" width="1.7" height="1.6" fill="#fffbe6"/></svg><div style="position:absolute;left:509.5px;top:544.64px;line-height:20px;font-size:12px;font-family:'Liberation Sans',sans-serif;color:#5e5a2c;white-space:pre;font-weight:bold;">Paused on subtree modifications</div><div style="position:absolute;left:509.5px;top:563.74px;line-height:20px;font-size:11.5px;font-family:'Liberation Mono',monospace;color:#222;white-space:pre;letter-spacing:-0.300px;"><span style="color:#881280">section</span><span style="color:#994500">.article_contents.infinite_con…</span></div><div style="position:absolute;left:509.5px;top:576.74px;line-height:20px;font-size:11.5px;font-family:'Liberation Mono',monospace;color:#5e5a2c;white-space:pre;letter-spacing:-0.300px;">Child</div><div style="position:absolute;left:509.5px;top:589.74px;line-height:20px;font-size:11.5px;font-family:'Liberation Mono',monospace;color:#222;white-space:pre;letter-spacing:-0.300px;"><span style="color:#881280">section</span><span style="color:#994500">.article_contents.infinite_con…</span></div><div style="position:absolute;left:509.5px;top:602.74px;line-height:20px;font-size:11.5px;font-family:'Liberation Mono',monospace;color:#5e5a2c;white-space:pre;letter-spacing:-0.300px;">added</div><div style="position:absolute;left:488px;top:625px;width:285px;height:1px;background:#e8e2c0"></div><div style="position:absolute;left:488px;top:626px;width:285px;height:22px;background:#f3f3f3"></div><div style="position:absolute;left:488px;top:647px;width:285px;height:1px;background:#ddd"></div><svg style="position:absolute;left:494px;top:635px" width="8" height="6"><path d="M0 0 H8 L4 6 Z" fill="#727272"/></svg><div style="position:absolute;left:505px;top:627.44px;line-height:20px;font-size:12px;font-family:'Liberation Sans',sans-serif;color:#333;white-space:pre;">Call Stack</div><div style="position:absolute;left:488px;top:648px;width:285px;height:87px;background:#fff"></div><svg style="position:absolute;left:493px;top:654px" width="9" height="10" viewBox="0 0 9 10"><path d="M0 2.5 H4 V0 L9 5 L4 10 V7.5 H0 Z" fill="#3b86f0"/></svg><div style="position:absolute;left:508px;top:649.54px;line-height:20px;font-size:12px;font-family:'Liberation Sans',sans-serif;color:#333;white-space:pre;">(anonymous)</div><div style="position:absolute;right:301px;top:649.54px;line-height:20px;font-size:12px;font-family:'Liberation Sans',sans-serif;color:#8a8a8a;white-space:pre;">inifinite.js:15</div><div style="position:absolute;left:488px;top:681px;width:14px;height:1px;background:#ddd"></div><div style="position:absolute;left:633px;top:681px;width:140px;height:1px;background:#ddd"></div><div style="position:absolute;left:508px;top:670.84px;line-height:20px;font-size:12px;font-family:'Liberation Sans',sans-serif;color:#a9a9a9;white-space:pre;font-weight:bold;">Promise.then (async)</div><div style="position:absolute;left:508px;top:691.04px;line-height:20px;font-size:12px;font-family:'Liberation Sans',sans-serif;color:#333;white-space:pre;">(anonymous)</div><div style="position:absolute;right:301px;top:691.04px;line-height:20px;font-size:12px;font-family:'Liberation Sans',sans-serif;color:#8a8a8a;white-space:pre;">inifinite.js:13</div><div style="position:absolute;left:488px;top:712px;width:285px;height:1px;background:#eee"></div><div style="position:absolute;left:508px;top:713.14px;line-height:20px;font-size:12px;font-family:'Liberation Sans',sans-serif;color:#333;white-space:pre;">callback</div><div style="position:absolute;right:301px;top:713.14px;line-height:20px;font-size:12px;font-family:'Liberation Sans',sans-serif;color:#8a8a8a;white-space:pre;">inifinite.js:4</div><div style="position:absolute;left:488px;top:734px;width:285px;height:1px;background:#ddd"></div><div style="position:absolute;left:488px;top:735px;width:285px;height:14px;background:#f3f3f3"></div><svg style="position:absolute;left:494px;top:744px" width="8" height="6"><path d="M0 0 H8 L4 6 Z" fill="#727272"/></svg><div style="position:absolute;left:505px;top:735.34px;line-height:20px;font-size:12px;font-family:'Liberation Sans',sans-serif;color:#333;white-space:pre;">Breakpoints</div><div style="position:absolute;left:774px;top:514px;width:282px;height:26px;background:#f3f3f3"></div><div style="position:absolute;left:783.3px;top:517.24px;line-height:20px;font-size:12px;font-family:'Liberation Sans',sans-serif;color:#333;white-space:pre;">Scope</div><div style="position:absolute;left:838px;top:517.24px;line-height:20px;font-size:12px;font-family:'Liberation Sans',sans-serif;color:#5a5a5a;white-space:pre;">Watch</div><div style="position:absolute;left:774px;top:539px;width:54px;height:2px;background:#1a73e8"></div><div style="position:absolute;left:828px;top:540px;width:228px;height:1px;background:#cdcdcd"></div><div style="position:absolute;left:774px;top:541px;width:282px;height:208px;background:#fff"></div><svg style="position:absolute;left:779px;top:548px" width="8" height="6"><path d="M0 0 H8 L4 6 Z" fill="#6e6e6e"/></svg><div style="position:absolute;left:789px;top:541.34px;line-height:20px;font-size:11.5px;font-family:'Liberation Mono',monospace;color:#222;white-space:pre;letter-spacing:-0.300px;">Local</div><div style="position:absolute;left:801.5px;top:556.74px;line-height:20px;font-size:11.5px;font-family:'Liberation Mono',monospace;color:#222;white-space:pre;letter-spacing:-0.300px;"><span style="color:#881391">article_body</span>: "<span style="color:#c80000">&lt;h1&gt;another story&lt;/h1&gt;</span>…</div><svg style="position:absolute;left:791px;top:580px" width="8" height="6"><path d="M0 0 H8 L4 6 Z" fill="#6e6e6e"/></svg><div style="position:absolute;left:801.5px;top:572.74px;line-height:20px;font-size:11.5px;font-family:'Liberation Mono',monospace;color:#222;white-space:pre;letter-spacing:-0.300px;"><span style="color:#881391">e</span>:</div><div style="position:absolute;left:813.7px;top:588.74px;line-height:20px;font-size:11.5px;font-family:'Liberation Mono',monospace;color:#222;white-space:pre;letter-spacing:-0.300px;"><span style="color:#881391">data</span>: "<span style="color:#c80000">&lt;h1&gt;another story&lt;/h1&gt;&lt;p&gt;art</span>…</div><svg style="position:absolute;left:804px;top:611px" width="6" height="8"><path d="M0 0 V8 L6 4 Z" fill="#6e6e6e"/></svg><div style="position:absolute;left:813.7px;top:604.54px;line-height:20px;font-size:11.5px;font-family:'Liberation Mono',monospace;color:#222;white-space:pre;letter-spacing:-0.300px;"><span style="color:#881391">__proto__</span>: Object</div><div style="position:absolute;left:801.5px;top:620.94px;line-height:20px;font-size:11.5px;font-family:'Liberation Mono',monospace;color:#222;white-space:pre;letter-spacing:-0.300px;"><span style="color:#881391">this</span>: <span style="color:#777">undefined</span></div><svg style="position:absolute;left:780px;top:646.2px" width="6" height="8"><path d="M0 0 V8 L6 4 Z" fill="#6e6e6e"/></svg><div style="position:absolute;left:789.5px;top:641.64px;line-height:20px;font-size:11.5px;font-family:'Liberation Mono',monospace;color:#222;white-space:pre;letter-spacing:-0.300px;">Closure</div><svg style="position:absolute;left:780px;top:666.0px" width="6" height="8"><path d="M0 0 V8 L6 4 Z" fill="#6e6e6e"/></svg><div style="position:absolute;left:789.5px;top:661.44px;line-height:20px;font-size:11.5px;font-family:'Liberation Mono',monospace;color:#222;white-space:pre;letter-spacing:-0.300px;">Closure (callback)</div><svg style="position:absolute;left:780px;top:685.8000000000001px" width="6" height="8"><path d="M0 0 V8 L6 4 Z" fill="#6e6e6e"/></svg><div style="position:absolute;left:789.5px;top:681.24px;line-height:20px;font-size:11.5px;font-family:'Liberation Mono',monospace;color:#222;white-space:pre;letter-spacing:-0.300px;">Script</div><svg style="position:absolute;left:780px;top:705.6px" width="6" height="8"><path d="M0 0 V8 L6 4 Z" fill="#6e6e6e"/></svg><div style="position:absolute;left:789.5px;top:701.04px;line-height:20px;font-size:11.5px;font-family:'Liberation Mono',monospace;color:#222;white-space:pre;letter-spacing:-0.300px;">Global</div><div style="position:absolute;left:1015.4px;top:701.14px;line-height:20px;font-size:11.5px;font-family:'Liberation Mono',monospace;color:#222;white-space:pre;letter-spacing:-0.300px;">Window</div><svg style="position:absolute;left:0;top:0" width="1056" height="749" viewBox="0 0 1056 749"><defs><filter id="sh" x="-20%" y="-20%" width="140%" height="140%"><feDropShadow dx="-0.6" dy="1" stdDeviation="0.9" flood-color="#000" flood-opacity="0.35"/></filter></defs><g filter="url(#sh)"><line x1="752.6" y1="255.3" x2="956" y2="255.3" stroke="#f72a68" stroke-width="7" stroke-linecap="round"/><line x1="814.2" y1="608.9" x2="1042.3" y2="608.9" stroke="#f72a68" stroke-width="7" stroke-linecap="round"/><path d="M765.6 278.2 L756.4 329.9 L748.6 319.5 Q715.1 352.85 687.2 386.2 A2.1 2.1 0 0 1 684.1 384 Q711.55 345.25 730.8 306.5 L718.2 301.7 Z" fill="#f72a68"/><path d="M825.7 576.4 L779 566.5 L788.6 559.5 Q784.55 549.6 742.3 511.7 A1.8 1.8 0 0 1 744 509 Q777.45 534.25 801.1 544.5 L805.5 533.1 Z" fill="#f72a68"/></g></svg></body></html>
